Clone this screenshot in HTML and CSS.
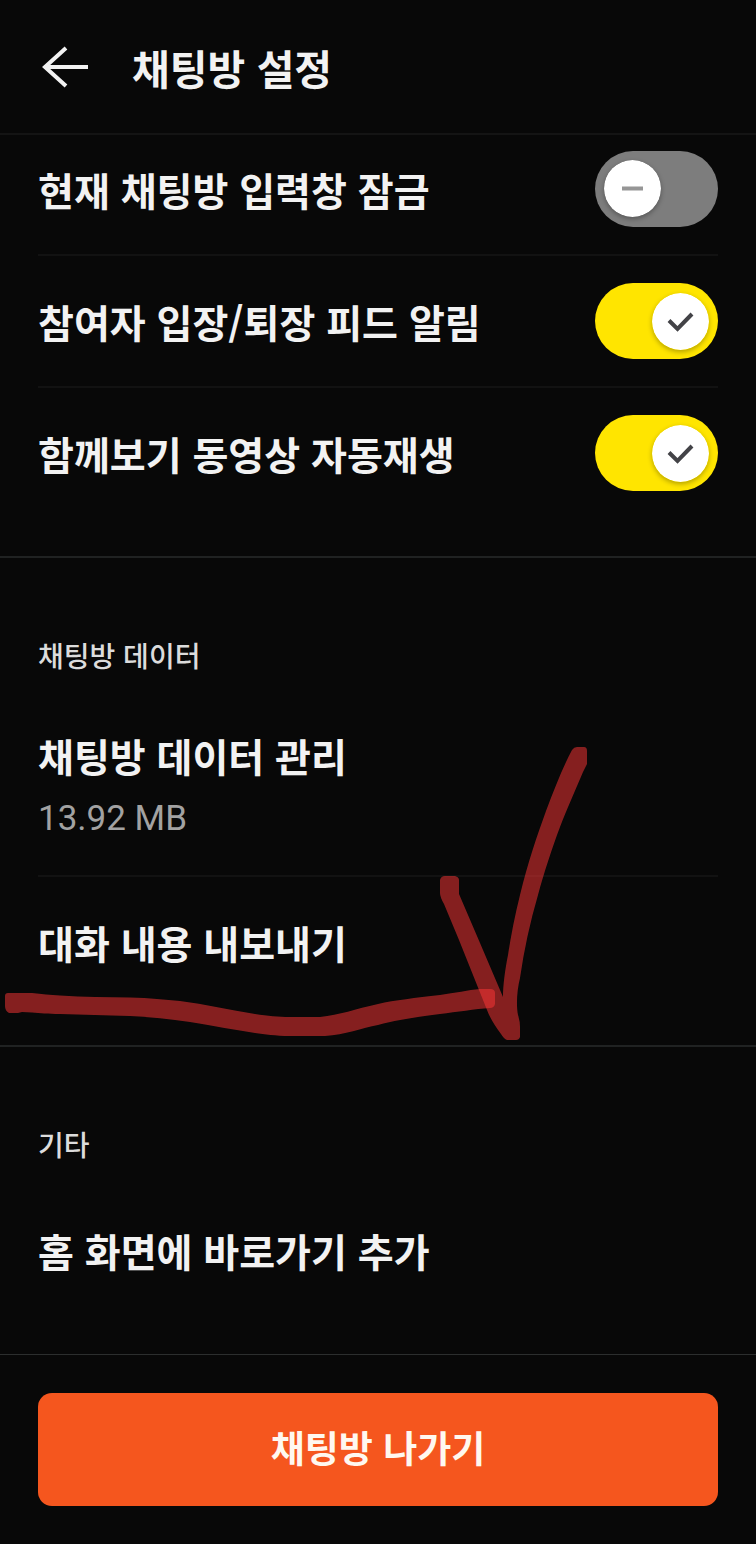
FILE: index.html
```html
<!DOCTYPE html>
<html lang="ko">
<head>
<meta charset="utf-8">
<meta name="viewport" content="width=device-width, initial-scale=1">
<title>채팅방 설정</title>
<link rel="stylesheet" href="styles.css">
</head>
<body>
<div class="screen">
  <header class="header">
    <button class="back" type="button" aria-label="뒤로">
      <svg class="back-icon" viewBox="0 0 48 44" aria-hidden="true"><path d="M46 22H4M24 3 3 22 24 41"/></svg>
    </button>
    <h1 class="title">채팅방 설정</h1>
  </header>

  <main class="content">
    <section class="section section-toggles">
      <label class="row">
        <span class="label">현재 채팅방 입력창 잠금</span>
        <span class="switch">
          <input class="track" type="checkbox">
          <svg class="thumb" viewBox="0 0 57 57" aria-hidden="true"><circle cx="28.500" cy="28.500" r="28.500" fill="#fff"/><path d="M18 28.500h21" stroke="#969696" stroke-width="4"/></svg>
        </span>
      </label>
      <label class="row">
        <span class="label">참여자 입장/퇴장 피드 알림</span>
        <span class="switch">
          <input class="track" type="checkbox" checked>
          <svg class="thumb" viewBox="0 0 57 57" aria-hidden="true"><circle cx="28.500" cy="28.500" r="28.500" fill="#fff"/><path d="M17 27.500l8.500 8.500L40 21" fill="none" stroke="#434347" stroke-width="4"/></svg>
        </span>
      </label>
      <label class="row">
        <span class="label">함께보기 동영상 자동재생</span>
        <span class="switch">
          <input class="track" type="checkbox" checked>
          <svg class="thumb" viewBox="0 0 57 57" aria-hidden="true"><circle cx="28.500" cy="28.500" r="28.500" fill="#fff"/><path d="M17 27.500l8.500 8.500L40 21" fill="none" stroke="#434347" stroke-width="4"/></svg>
        </span>
      </label>
    </section>

    <section class="section">
      <h2 class="section-title">채팅방 데이터</h2>
      <button class="row row-stacked" type="button">
        <span class="label">채팅방 데이터 관리</span>
        <span class="value">13.92 MB</span>
      </button>
      <button class="row" type="button"><span class="label">대화 내용 내보내기</span></button>
      <svg class="marker" viewBox="0 740 600 310" aria-hidden="true">
        <path d="M8 993H32C42 994 50 995 60 995.500C84 997 107 997 130 997.500C150 998 165 1000 180 1001C205 1004 230 1010 255 1014C268 1016 278 1017 290 1017H320C340 1015 355 1009 378 1004C395 1000 415 998 440 995C455 993 468 990 480 989H490Q495 989 495 993V1004Q494 1008 490 1008C475 1009 457 1012 440 1014C415 1017 397 1020 378 1025C362 1028 345 1035 325 1036H290C275 1036 265 1034 255 1033C235 1030 215 1026 190 1022C170 1019 150 1017 130 1016C105 1015 84 1015 60 1014C48 1014 40 1013 32 1012.500L22 1012L18 1013H9Q5 1011 5 1006V996Q5 993 8 993Z"/>
        <path d="M440 880Q441 876 445 876H455Q459 877 459 880V894L480 943L503 997C503 985 505 970 508 955C511 935 515 915 520 895C528 862 537 836 546 811C555 787 563 767 572 750Q574 747 577 747H584Q587 747 587 751V764L583 772C574 793 567 809 560 827C552 848 544 873 538 895C530 922 524 950 520 978C517 990 516 1005 518 1015Q520 1021 520 1027V1037Q519 1040 516 1040H507Q504 1039 501 1034C495 1026 490 1018 487 1010L459 940L444 904Q440 897 440 893Z"/>
      </svg>
    </section>

    <section class="section section-last">
      <h2 class="section-title">기타</h2>
      <button class="row" type="button"><span class="label">홈 화면에 바로가기 추가</span></button>
    </section>
  </main>

  <footer class="footer">
    <button class="leave" type="button">채팅방 나가기</button>
  </footer>
</div>
</body>
</html>
```
FILE: styles.css
```css
* {
  box-sizing: border-box;
}

body {
  margin: 0;
  background: #080808;
  color: #f2f2f2;
  font-family: "Noto Sans CJK KR", "Noto Sans", sans-serif;
}

button {
  margin: 0;
  padding: 0;
  border: 0;
  background: none;
  color: inherit;
  font: inherit;
  text-align: left;
}

h1,
h2 {
  margin: 0;
}

.screen {
  display: flex;
  flex-direction: column;
  min-height: 100vh;
}

.header {
  display: flex;
  align-items: center;
  gap: 42px;
  height: 135px;
  padding: 0 42px;
  border-bottom: 2px solid #141414;
}

.back {
  display: flex;
}

.back-icon {
  width: 48px;
  height: 44px;
  fill: none;
  stroke: #f2f2f2;
  stroke-width: 4;
}

.title {
  font-size: 41px;
  line-height: 56px;
  font-weight: 700;
}

.content {
  flex: 1;
}

.section {
  position: relative;
  padding: 77px 38px 38px;
  border-top: 2px solid #202222;
}

.section-toggles {
  padding-top: 0;
  border-top: 0;
}

.section-last {
  padding-bottom: 36px;
}

.section-title {
  margin-bottom: 20px;
  color: #dcdcdc;
  font-size: 28px;
  line-height: 40px;
  font-weight: 500;
}

.row {
  display: flex;
  align-items: center;
  justify-content: space-between;
  gap: 20px;
  width: 100%;
  min-height: 132px;
}

.row + .row {
  border-top: 2px solid #121212;
}

.section-toggles .row:first-child {
  min-height: 119px;
  padding-bottom: 12px;
}

.label {
  font-size: 39px;
  line-height: 48px;
  font-weight: 700;
}

.row-stacked {
  flex-direction: column;
  align-items: flex-start;
  justify-content: flex-start;
  gap: 20px;
  padding: 36px 0;
}

.value {
  color: #a2a2a2;
  font-family: Roboto, "Noto Sans CJK KR", sans-serif;
  font-size: 35px;
  line-height: 40px;
  font-weight: 400;
}

.switch {
  display: grid;
  flex: none;
  align-items: center;
}

.track {
  grid-area: 1 / 1;
  appearance: none;
  width: 123px;
  height: 76px;
  margin: 0;
  border-radius: 38px;
  background: #7d7d7d;
}

.track:checked {
  background: #ffe500;
}

.thumb {
  grid-area: 1 / 1;
  width: 57px;
  height: 57px;
  margin: 0 9px;
  border-radius: 50%;
  box-shadow: 0 2px 5px rgba(0, 0, 0, 0.3);
  pointer-events: none;
}

.track:checked + .thumb {
  justify-self: end;
}

.marker {
  position: absolute;
  top: 182px;
  left: 0;
  width: 600px;
  height: 310px;
  fill: rgba(255, 54, 54, 0.51);
  pointer-events: none;
}

.footer {
  padding: 38px;
  border-top: 1px solid #2c2e2e;
}

.leave {
  width: 100%;
  padding: 28px 30px 32px;
  border-radius: 14px;
  background: #f5561e;
  color: #fff8f0;
  font-size: 37px;
  line-height: 53px;
  font-weight: 700;
  text-align: center;
}
```
